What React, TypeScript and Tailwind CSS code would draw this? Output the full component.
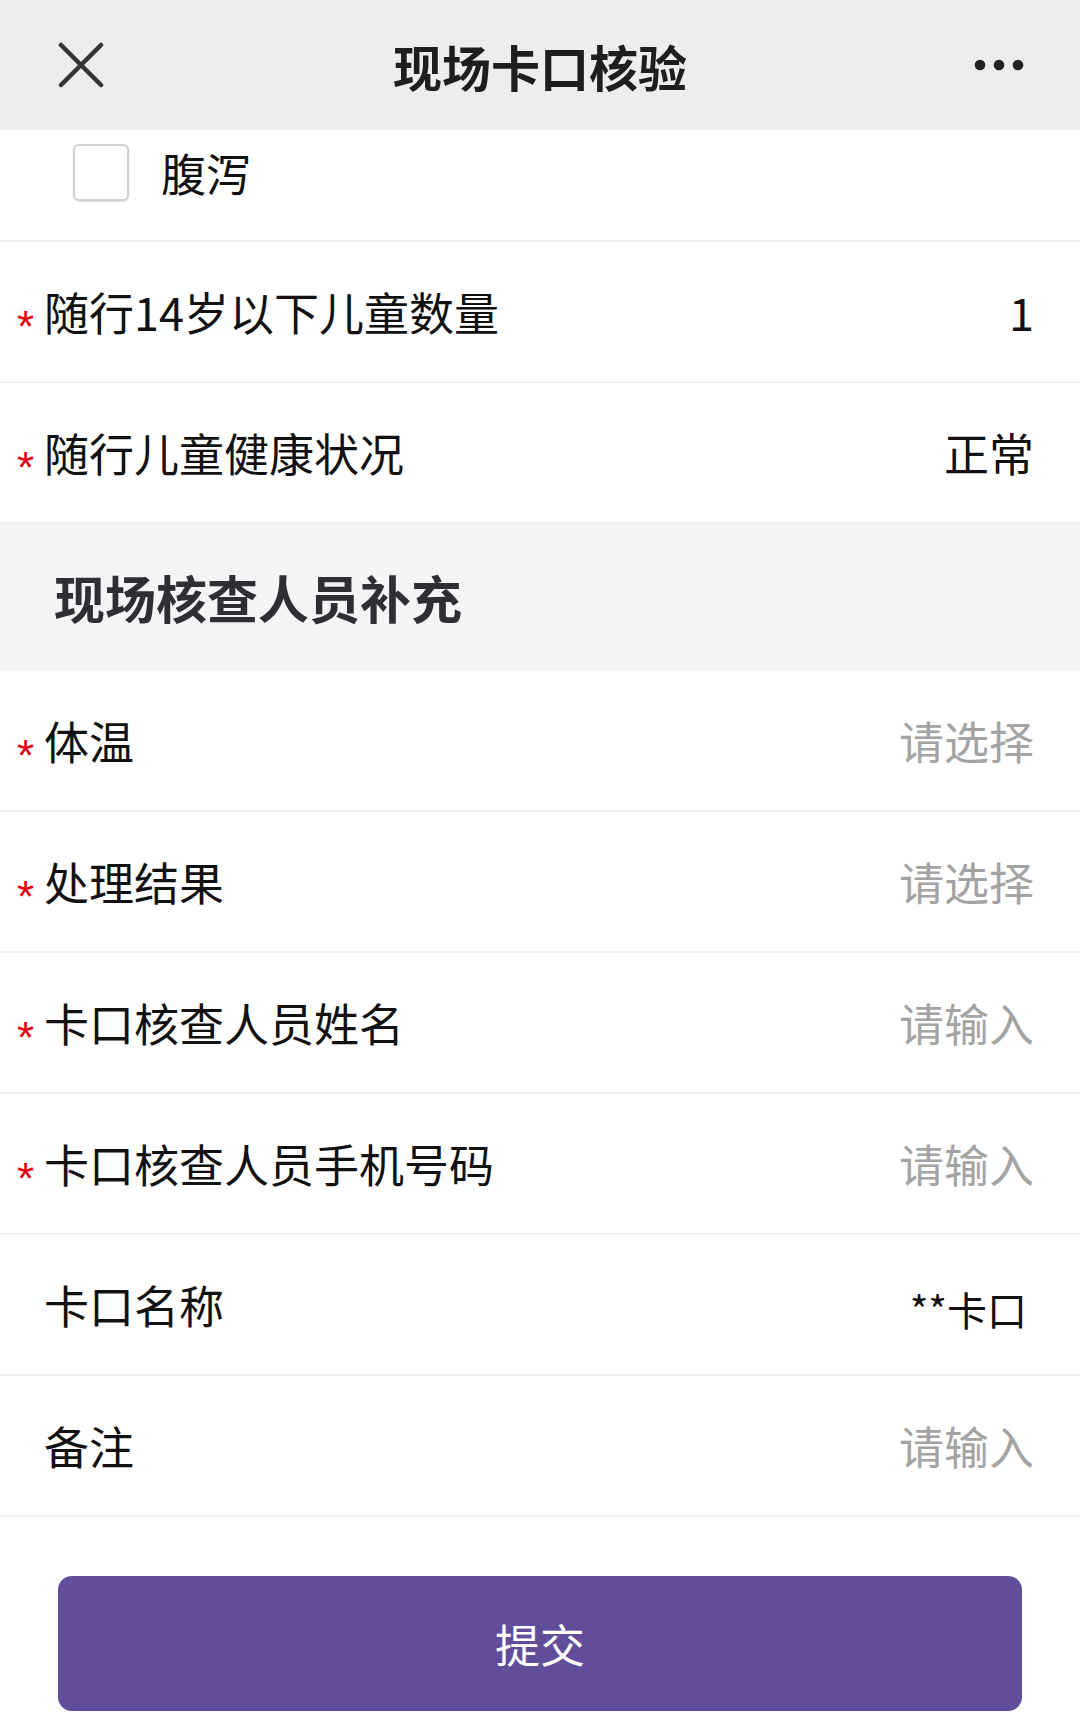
import { ReactNode } from "react";

const FONT = '"Noto Sans CJK SC", "Noto Sans", sans-serif';

interface RowProps {
  label: string;
  required?: boolean;
  value?: string;
  placeholder?: string;
  valueClass?: string;
}

function Row({ label, required, value, placeholder, valueClass }: RowProps) {
  return (
    <div className="flex h-[141px] items-center border-b-2 border-[#f0f0f0] bg-white pr-[46px]">
      <div className="flex h-full w-[44px] shrink-0 items-center pl-[17px]">
        {required && (
          <span
            className="mt-[30px] text-[44px] leading-none text-[#e60012]"
            style={{ fontFamily: '"Liberation Sans", sans-serif' }}
          >
            *
          </span>
        )}
      </div>
      <span className="flex-1 text-[45px] leading-none text-[#111]">{label}</span>
      {value ? (
        <span className={valueClass ?? "text-[45px] leading-none text-[#111]"}>{value}</span>
      ) : (
        <span className="text-[45px] leading-none text-[#a3a3a3]">{placeholder}</span>
      )}
    </div>
  );
}

function Header({ children }: { children: ReactNode }) {
  return (
    <div className="grid h-[130px] grid-cols-[1fr_auto_1fr] items-center bg-[#ededed]">
      <div className="pl-[58px]">
        <svg width="46" height="46" viewBox="0 0 46 46" fill="none">
          <path d="M3 3 L43 43 M43 3 L3 43" stroke="#333" strokeWidth="4.5" strokeLinecap="round" />
        </svg>
      </div>
      <h1 className="text-[49px] font-bold leading-none text-[#1e1e1e]">{children}</h1>
      <div className="flex justify-end pr-[56px]">
        <svg width="50" height="12" viewBox="0 0 50 12">
          <circle cx="6" cy="6" r="5.3" fill="#222" />
          <circle cx="25" cy="6" r="5.3" fill="#222" />
          <circle cx="44" cy="6" r="5.3" fill="#222" />
        </svg>
      </div>
    </div>
  );
}

export default function App() {
  return (
    <div className="h-[1724px] w-[1080px] overflow-hidden bg-white" style={{ fontFamily: FONT }}>
      <Header>现场卡口核验</Header>

      <div className="h-[112px] border-b-2 border-[#f0f0f0] pl-[73px] pt-[14px]">
        <label className="flex h-[57px] items-center gap-[32px]">
          <span className="h-[57px] w-[56px] rounded-[6px] border-2 border-[#cfcfcf] bg-white shadow-[0_1px_2px_rgba(0,0,0,0.12)]" />
          <span className="text-[45px] leading-none text-[#111]">腹泻</span>
        </label>
      </div>

      <Row label="随行14岁以下儿童数量" required value="1" />
      <Row label="随行儿童健康状况" required value="正常" />

      <div className="flex h-[147px] items-center bg-[#f5f5f7] pl-[54px]">
        <h2 className="text-[51px] font-bold leading-none text-[#2e2e33]">现场核查人员补充</h2>
      </div>

      <Row label="体温" required placeholder="请选择" />
      <Row label="处理结果" required placeholder="请选择" />
      <Row label="卡口核查人员姓名" required placeholder="请输入" />
      <Row label="卡口核查人员手机号码" required placeholder="请输入" />
      <Row
        label="卡口名称"
        value="**卡口"
        valueClass="mr-[7px] mt-[8px] text-[40px] leading-none text-[#111]"
      />
      <Row label="备注" placeholder="请输入" />

      <div className="px-[58px] pt-[59px]">
        <button className="flex h-[135px] w-full items-center justify-center rounded-[14px] bg-[#624d9b] text-[45px] text-white">
          提交
        </button>
      </div>
    </div>
  );
}
